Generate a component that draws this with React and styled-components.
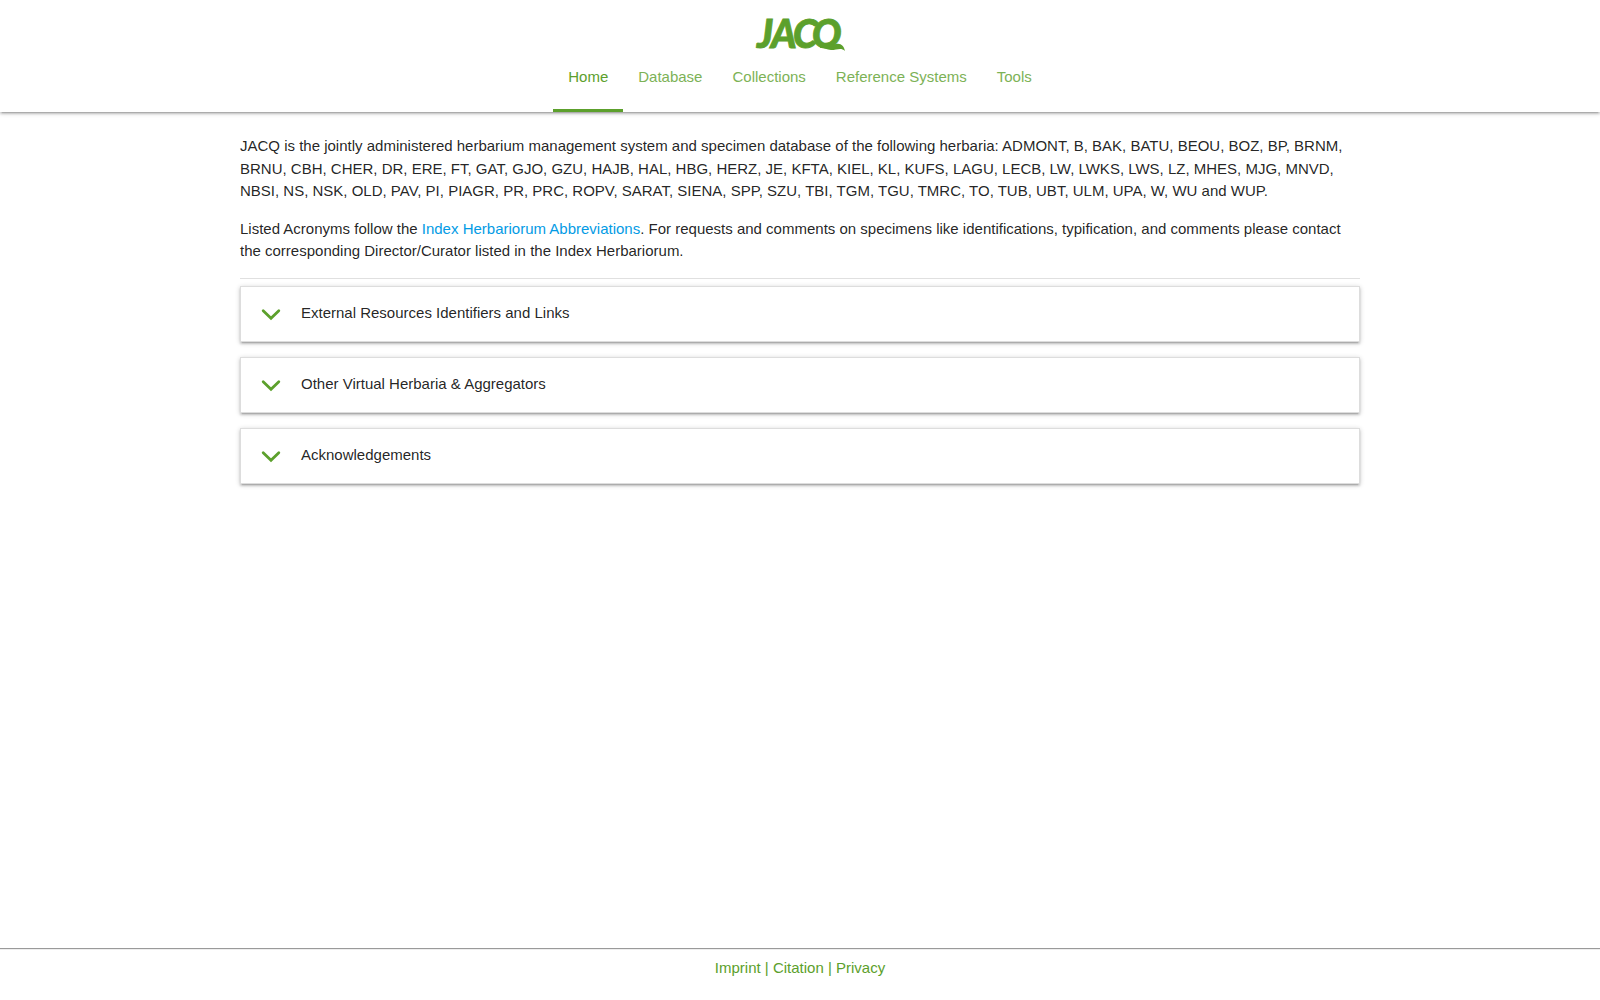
import React from "react"
import styled, { createGlobalStyle } from "styled-components"

const theme = {
  green: "#5ca02c",
  link: "#039be5",
  text: "rgba(0, 0, 0, 0.87)",
  shadow:
    "0 2px 2px 0 rgba(0, 0, 0, 0.14), 0 3px 1px -2px rgba(0, 0, 0, 0.12), 0 1px 5px 0 rgba(0, 0, 0, 0.2)",
}

const GlobalStyle = createGlobalStyle`
  *, *::before, *::after {
    box-sizing: border-box;
  }
  body {
    margin: 0;
    background: white;
    color: ${theme.text};
    font-family: "Liberation Sans", Arial, sans-serif;
    font-size: 15px;
    line-height: 1.5;
  }
`

const Page = styled.div`
  display: flex;
  flex-direction: column;
  min-height: 100vh;
`

const Header = styled.header`
  display: flex;
  flex-direction: column;
  align-items: center;
  box-shadow: ${theme.shadow};
`

const LogoLink = styled.a`
  display: block;
  height: 53px;

  svg {
    display: block;
  }
`

const Tabs = styled.nav`
  display: flex;
  height: 59px;
`

const Tab = styled.a`
  padding: 0 15px;
  border-bottom: 3px solid ${(p) => (p.$active ? theme.green : "transparent")};
  color: ${theme.green};
  line-height: 48px;
  text-decoration: none;

  span {
    opacity: ${(p) => (p.$active ? 1 : 0.8)};
  }
`

const Main = styled.main`
  flex: 1;
  width: 70%;
  margin: 0 auto;
  padding-top: 23px;

  p {
    margin: 0 0 15px;
  }
  p a {
    color: ${theme.link};
    text-decoration: none;
  }
`

const Divider = styled.hr`
  height: 1px;
  margin: 0 0 7px;
  border: 0;
  background: #e0e0e0;
`

const Panels = styled.div`
  display: flex;
  flex-direction: column;
  gap: 15px;
`

const Panel = styled.button`
  display: flex;
  align-items: flex-start;
  gap: 15px;
  width: 100%;
  height: 56px;
  padding: 15px;
  border: 1px solid #ddd;
  background: white;
  box-shadow: ${theme.shadow};
  color: inherit;
  font: inherit;
  text-align: left;
  cursor: pointer;

  svg {
    flex: none;
  }
`

const Footer = styled.footer`
  height: 52px;
  padding-top: 8px;
  border-top: 1px solid #9a9a9a;
  box-shadow: inset 0 1px #eee;
  color: ${theme.green};
  text-align: center;

  a {
    color: inherit;
    text-decoration: none;
  }
`

const tabs = ["Home", "Database", "Collections", "Reference Systems", "Tools"]

const panels = [
  "External Resources Identifiers and Links",
  "Other Virtual Herbaria & Aggregators",
  "Acknowledgements",
]

const Logo = () => (
  <svg width="92" height="53" viewBox="0 0 92 53" role="img" aria-label="JACQ">
    {/* the leaf takes the place of the tail of the Q */}
    <clipPath id="baseline">
      <rect width="92" height="49" />
    </clipPath>
    <g
      fill={theme.green}
      stroke={theme.green}
      strokeWidth="0.9"
      clipPath="url(#baseline)"
      fontFamily="Lato, sans-serif"
      fontSize="39"
      fontWeight="900"
      fontStyle="italic"
    >
      <text y="48" x="3 17 39 58">
        JACQ
      </text>
    </g>
    <path
      d="M66 44 C71 42 76 45 82 44 C87 43 90 46 91 51 C87 47 83 50 77 50 C72 50 69 47 66 48Z"
      fill={theme.green}
    />
  </svg>
)

const Chevron = () => (
  <svg width="30" height="24" viewBox="0 0 30 24" aria-hidden="true">
    <path
      d="M7.2 8.8 L15 16.2 L22.8 8.8"
      fill="none"
      stroke={theme.green}
      strokeWidth="2.8"
      strokeLinecap="round"
    />
  </svg>
)

const App = () => {
  return (
    <>
      <GlobalStyle />
      <Page>
        <Header>
          <LogoLink href="#">
            <Logo />
          </LogoLink>
          <Tabs>
            {tabs.map((tab, i) => (
              <Tab key={tab} href="#" $active={i === 0}>
                <span>{tab}</span>
              </Tab>
            ))}
          </Tabs>
        </Header>
        <Main>
          <p>
            JACQ is the jointly administered herbarium management system and
            specimen database of the following herbaria: ADMONT, B, BAK, BATU,
            BEOU, BOZ, BP, BRNM, BRNU, CBH, CHER, DR, ERE, FT, GAT, GJO, GZU,
            HAJB, HAL, HBG, HERZ, JE, KFTA, KIEL, KL, KUFS, LAGU, LECB, LW,
            LWKS, LWS, LZ, MHES, MJG, MNVD, NBSI, NS, NSK, OLD, PAV, PI, PIAGR,
            PR, PRC, ROPV, SARAT, SIENA, SPP, SZU, TBI, TGM, TGU, TMRC, TO, TUB,
            UBT, ULM, UPA, W, WU and WUP.
          </p>
          <p>
            Listed Acronyms follow the{" "}
            <a href="#">Index Herbariorum Abbreviations</a>. For requests and
            comments on specimens like identifications, typification, and
            comments please contact the corresponding Director/Curator listed in
            the Index Herbariorum.
          </p>
          <Divider />
          <Panels>
            {panels.map((title) => (
              <Panel key={title} type="button" aria-expanded="false">
                <Chevron />
                <span>{title}</span>
              </Panel>
            ))}
          </Panels>
        </Main>
        <Footer>
          <a href="#">Imprint</a> | <a href="#">Citation</a> |{" "}
          <a href="#">Privacy</a>
        </Footer>
      </Page>
    </>
  )
}

export default App
